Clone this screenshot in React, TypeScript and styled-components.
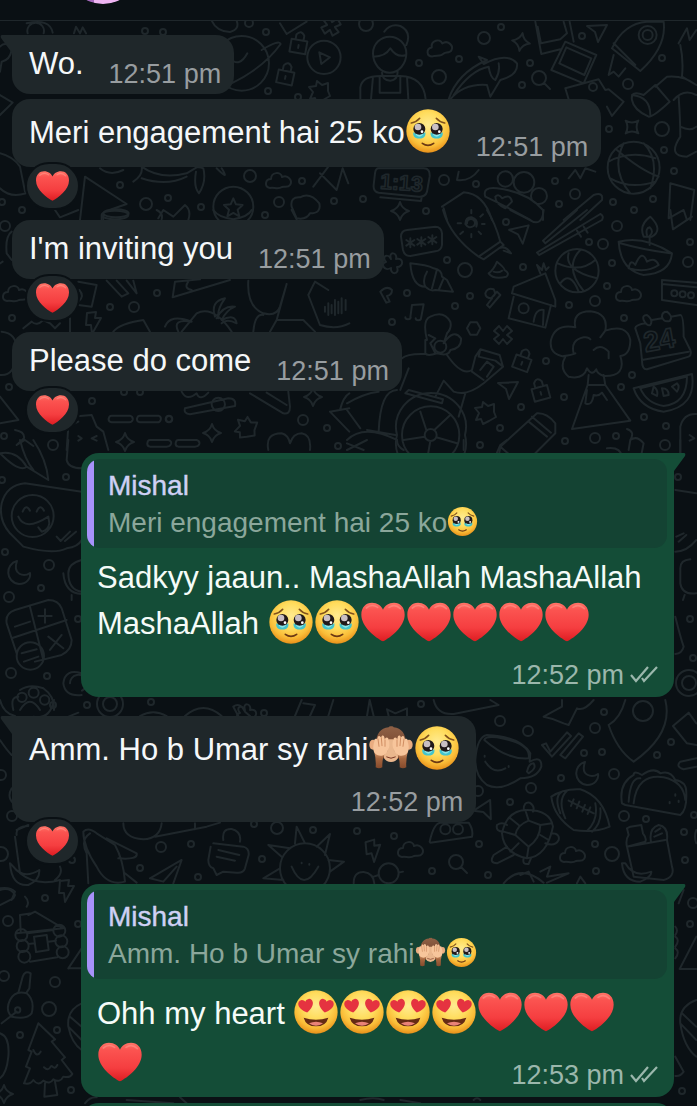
import React from "react";
import styled, { createGlobalStyle } from "styled-components";

const GlobalStyle = createGlobalStyle`
  * { box-sizing: border-box; }
  body {
    margin: 0;
    background: #0a1014;
    font-family: "Liberation Sans", Arial, sans-serif;
  }
`;

const INK = "#1f272b";

/* ---------- emoji ---------- */

type EmojiKind = "tears" | "heart" | "love" | "monkey";

const emojiLabel: Record<EmojiKind, string> = {
  tears: "face holding back tears",
  heart: "red heart",
  love: "smiling face with heart-eyes",
  monkey: "see-no-evil monkey",
};

const HEART =
  "M0 58C-22 47-65 14-65-22C-65-45-51-58-33-58C-17-58-5-49 0-37C5-49 17-58 33-58C51-58 65-45 65-22C65 14 22 47 0 58Z";

const EmojiDefs = () => (
  <svg width="0" height="0" style={{ position: "absolute" }} aria-hidden="true">
    <defs>
      <radialGradient id="face" cx="50%" cy="36%" r="66%">
        <stop offset="0" stopColor="#ffeb91" />
        <stop offset="0.45" stopColor="#ffdc5c" />
        <stop offset="0.75" stopColor="#fabd38" />
        <stop offset="1" stopColor="#e58a16" />
      </radialGradient>
      <linearGradient id="heart" x1="0" y1="0" x2="0" y2="1">
        <stop offset="0" stopColor="#ff7467" />
        <stop offset="0.2" stopColor="#fb5350" />
        <stop offset="0.65" stopColor="#f53e40" />
        <stop offset="1" stopColor="#de1c22" />
      </linearGradient>
      <linearGradient id="fur" x1="0" y1="0" x2="0" y2="1">
        <stop offset="0" stopColor="#8f6146" />
        <stop offset="1" stopColor="#6c3a24" />
      </linearGradient>
      <linearGradient id="arm" x1="0" y1="0" x2="0" y2="1">
        <stop offset="0" stopColor="#d79c70" />
        <stop offset="0.45" stopColor="#a5663f" />
        <stop offset="1" stopColor="#854a2c" />
      </linearGradient>
    </defs>
  </svg>
);

const TearEye = ({ x }: { x: number }) => (
  <g transform={`translate(${x} -6)`}>
    <path d="M-18 10Q0 20 18 10Q20 22 12 26Q0 31-12 26Q-20 22-18 10Z" fill="#43c4cd" />
    <circle r="18" fill="#21191a" />
    <path d="M-12 13Q0 22 12 13Q10 22 0 23Q-10 22-12 13Z" fill="#8fe6e6" />
    <circle cx="-4" cy="-6" r="10" fill="#c9bfc4" />
    <circle cx="8" cy="8" r="4" fill="#fff" />
  </g>
);

const MonkeyHand = ({ flip }: { flip: number }) => (
  <g transform={`scale(${flip} 1)`}>
    <path d="M17 14Q27 30 26 58Q36 64 46 58Q44 34 51 8Z" fill="url(#arm)" />
    <path
      d="M5-6C4-16 6-30 11-31C15-32 18-29 18-25L21-35C23-39 29-38 29-32L32-34C35-38 41-35 40-29L44-27C48-29 51-25 50-19C55-4 55 10 46 18C38 25 24 25 16 17C10 11 6 4 5-6Z"
      fill="#f7c59b"
    />
    <path
      d="M18-24L18-5M29-31L27-7M39-27L36-5"
      stroke="#d08d62"
      strokeWidth="3"
      strokeLinecap="round"
      fill="none"
    />
  </g>
);

const EmojiArt = ({ kind }: { kind: EmojiKind }) => {
  if (kind === "heart") {
    return (
      <>
        <path d={HEART} fill="url(#heart)" />
        <path d="M-50-42Q-34-56-16-44M18-44Q36-56 52-40" stroke="#ff9d92" strokeWidth="5" strokeLinecap="round" fill="none" opacity="0.5" />
      </>
    );
  }
  if (kind === "monkey") {
    return (
      <>
        <ellipse cx="-54" cy="-10" rx="11" ry="15" fill="#e9ac80" />
        <ellipse cx="54" cy="-10" rx="11" ry="15" fill="#e9ac80" />
        <path d="M0-65Q6-67 8-62C32-60 44-42 46-12C44 14 26 38 0 38C-26 38-44 14-46-12C-44-42-32-60-7-62Q-5-66 0-65Z" fill="url(#fur)" />
        <path d="M-7-26H7L9 8Q24 16 21 30Q14 42 0 42Q-14 42-21 30Q-24 16-9 8Z" fill="#eab78d" />
        <path d="M-13 27Q0 35 13 27" stroke="#7b3a26" strokeWidth="3" strokeLinecap="round" fill="none" />
        <MonkeyHand flip={1} />
        <MonkeyHand flip={-1} />
      </>
    );
  }
  return (
    <>
      <circle r="65" fill="url(#face)" />
      {kind === "tears" ? (
        <>
          <path d="M-50-24Q-34-27-25-38M50-24Q34-27 25-38" stroke="#80501c" strokeWidth="5" strokeLinecap="round" fill="none" />
          <TearEye x={-26} />
          <TearEye x={26} />
          <path d="M-17 37Q0 49 17 37" stroke="#6b3814" strokeWidth="5" strokeLinecap="round" fill="none" />
        </>
      ) : (
        <>
          <path d="M-37 17Q0 29 37 17Q30 43 0 43Q-30 43-37 17Z" fill="#652b14" />
          <path d="M-21 34Q0 25 21 34Q12 41 0 41Q-12 41-21 34Z" fill="#ea8378" />
          <g transform="translate(-30 -18) rotate(-10) scale(.34)">
            <path d={HEART} fill="#e53340" />
          </g>
          <g transform="translate(30 -18) rotate(10) scale(.34)">
            <path d={HEART} fill="#e53340" />
          </g>
        </>
      )}
    </>
  );
};

const LargeEmoji = styled.svg`
  width: 46px;
  height: 50px;
  vertical-align: -14px;
`;

const SmallEmoji = styled.svg`
  width: 31px;
  height: 31px;
  vertical-align: -5px;
`;

const Emoji = ({ kind, small }: { kind: EmojiKind; small?: boolean }) =>
  small ? (
    <SmallEmoji viewBox="-69 -69 138 138" role="img" aria-label={emojiLabel[kind]}>
      <EmojiArt kind={kind} />
    </SmallEmoji>
  ) : (
    <LargeEmoji viewBox="-69 -72 138 150" role="img" aria-label={emojiLabel[kind]}>
      <EmojiArt kind={kind} />
    </LargeEmoji>
  );

/* ---------- doodle wallpaper ---------- */

const rings: [number, number, number][] = [
  [145,31,3],[163,32,3],[266,32,3],[249,23,4],[268,91,3],[298,97,3],[250,176,6],[120,185,3],[146,204,6],[168,198,3],[201,207,3],[302,181,3],[279,202,5],[334,201,3],[22,210,3],[2,202,3],[265,215,3],
  [366,24,7],[484,38,6],[501,27,3],[419,63,3],[459,59,3],[439,77,7],[530,63,3],[522,85,3],[582,36,3],[662,58,3],[628,84,5],[593,87,4],[609,129,3],[662,129,7],[664,150,3],[674,171,3],[653,199,3],[613,202,3],[634,210,3],[575,194,5],[559,204,3],[555,181,3],[444,180,5],[476,184,3],[363,199,3],[426,211,3],
  [5,226,5],[157,293,3],[110,307,3],[134,307,5],[12,318,3],[92,401,3],[169,419,3],[303,420,5],[327,428,3],[53,445,5],[4,436,3],[9,387,3],[338,446,3],[124,392,3],[140,392,3],
  [506,222,3],[617,226,5],[589,242,3],[603,244,5],[690,242,3],[688,262,5],[447,260,3],[465,270,7],[523,267,3],[612,263,3],[607,286,3],[595,301,5],[569,305,3],[624,318,3],[407,293,3],[455,306,3],[470,296,3],[392,322,3],[546,361,3],[632,375,3],[621,387,3],[564,397,3],[521,407,3],[644,417,3],[666,426,3],[665,445,5],[616,436,3],[595,438,5],[565,441,3],[480,445,3],[500,428,3],
  [66,477,3],[2,480,3],[5,552,3],[49,565,5],[41,588,3],[9,597,5],[11,673,5],[47,676,3],[78,619,3],[87,705,3],[151,702,3],[678,477,3],[690,619,3],[693,658,3],[689,683,7],[689,683,13],
  [1,775,5],[12,816,5],[1,854,7],[161,847,5],[191,844,3],[140,868,3],[198,877,3],[72,860,3],[262,859,3],[277,828,6],[313,830,3],[254,824,3],[264,713,3],[110,704,7],[110,704,13],[53,705,3],
  [500,721,5],[528,731,5],[595,728,5],[584,753,3],[602,752,3],[604,712,3],[671,742,3],[657,755,3],[614,774,5],[561,778,3],[531,788,5],[510,802,3],[478,791,5],[624,816,5],[646,819,3],[684,832,3],[612,854,7],[595,844,3],[596,871,3],[488,875,3],[432,871,3],[479,844,3],[394,836,3],[357,831,3],[685,860,3],[694,815,3],[421,704,3],
  [45,898,3],[78,924,3],[8,921,5],[4,976,5],[55,982,5],[49,1009,7],[57,1030,3],[20,1035,3],[71,1090,3],[690,924,3],[693,903,5],[682,1091,3],
];

type Motif = "cloud" | "sparkle" | "bolt" | "lock" | "lens" | "cross" | "moon" | "plane" | "leaf" | "flower";

const motifPaths: Record<Motif, string> = {
  cloud: "M-9 7C-15 6-14-2-8-2C-8-9 2-10 3-4C9-7 14 0 11 4C9 7 5 5 3 6C-1 9-5 6-9 7Z",
  sparkle: "M0-9Q2-2 9 0Q2 2 0 9Q-2 2-9 0Q-2-2 0-9Z",
  bolt: "M-6-9L3-10L2-4L8-4L-1 12L-2 3L-7 3Z",
  lock: "M-8-3H8V10H-8ZM-4-3V-8Q0-14 4-8V-3M0 2V5",
  lens: "M7-1A7 7 0 1 1-7-1A7 7 0 1 1 7-1M5 4L11 10",
  cross: "M-4-9L0-4L4-9L9-4L4 0L9 4L4 9L0 4L-4 9L-9 4L-4 0L-9-4Z",
  moon: "M-2-11C-14-8-14 10 0 12C8 12 12 6 11 1C5 5-7 3-2-11Z",
  plane: "M-10-6L10-7L1 10L-2 0Z",
  leaf: "M-9 8L-6 1L-10-4L-3-5L-2-10L3-6L9-8L9 0L11 5L4 9L-2 12L-4 7Z",
  flower: "M0-4C-3-12 7-11 5-4C13-6 13 4 6 4C9 12-1 12 0 5C-7 9-11 0-5-1C-10-7-3-10 0-4Z",
};

const motifs: [Motif, number, number, number][] = [
  ["cloud", 279, 181, 0], ["cross", 331, 26, 15], ["lock", 286, 74, 12], ["leaf", 319, 91, 0], ["lock", 299, 43, 10],
  ["cloud", 440, 48, -10], ["sparkle", 521, 42, 10], ["plane", 597, 32, 0], ["lens", 539, 79, 0], ["sparkle", 632, 127, 45],
  ["sparkle", 400, 211, 0], ["plane", 520, 234, -10], ["flower", 391, 263, 0], ["cross", 503, 335, 0], ["cloud", 629, 294, 0],
  ["lock", 523, 360, 20], ["lock", 540, 390, -15], ["plane", 508, 389, 0], ["leaf", 485, 412, 0],
  ["cloud", 16, 294, 0], ["bolt", 93, 322, 0], ["sparkle", 125, 442, 0], ["sparkle", 212, 433, 0], ["sparkle", 313, 397, 0], ["leaf", 246, 427, 20],
  ["moon", 19, 572, 0], ["cloud", 411, 850, 0], ["cloud", 573, 855, 0], ["moon", 587, 773, 0], ["lens", 456, 863, 0],
  ["bolt", 373, 850, -10], ["plane", 485, 811, -30], ["bolt", 66, 890, 0], ["sparkle", 4, 1094, 0], ["flower", 245, 714, 0],
];

const sketches: { at: [number, number]; d: string }[] = [
  {
    at: [0, 0],
    d: "M643 190a82 82 0 1 0 164 0a82 82 0 1 0-164 0M690 252Q790 205 842 132Q838 118 785 150M690 175Q718 205 742 160M922 172a50 50 0 1 0 100 0a50 50 0 1 0-100 0M958 157l32 15l-26 20zM0 285L38 308L0 345M640 620a60 60 0 1 0 120 0a60 60 0 1 0-120 0M700 595l8 18l20 2l-15 14l5 20l-18-10l-18 10l5-20l-15-14l20-2zM400 545Q430 525 425 500Q480 540 560 520L590 502Q600 500 610 505Q620 545 597 580Q580 560 588 515M425 535Q500 560 560 530M650 505Q690 545 665 505M240 660L255 530L380 612L335 628M305 645a40 13 0 1 0 80 0a40 13 0 1 0-80 0V665M80 70Q150 55 158 98M83 100a25 25 0 1 1 48 0M222 100L228 80L240 100L248 82L258 100M635 62Q650 95 690 96Q720 88 710 62M840 70L860 102L920 65M0 140Q20 120 35 150Q30 180 5 185L0 215M0 565Q30 595 78 580M0 460Q40 470 60 500L75 575M940 560L985 500M960 520L1010 570M1010 570L1028 505L1045 550M875 620Q870 590 900 592Q930 575 958 610Q965 640 930 640Q920 660 890 655ZM475 655L490 630L520 650L555 615Q575 630 565 660M300 505Q330 530 370 510",
  },
  {
    at: [347, 0],
    d: "M78 160a50 50 0 1 1 100 0a50 58 0 1 1-100 0M112 95Q130 70 160 78Q195 95 178 135M80 170Q115 170 130 145Q150 175 178 165M105 218Q105 240 130 242Q152 240 152 215M40 298V262Q45 228 100 228H160Q230 230 236 298M98 230V278H160V230M72 298L78 230M180 230L184 298M305 298Q330 220 420 180L395 170L410 192Q480 155 510 190Q515 225 460 240L430 290L420 255Q350 250 310 298M320 285Q370 210 425 200Q430 235 445 240Q460 215 455 190M565 65L583 162L640 148M572 80L582 130L640 118L660 100L650 65M668 65L680 125M655 125L748 165L710 250L613 210ZM658 142L733 175L712 225L637 190ZM655 265L755 238L775 270L785 268L830 305L795 348L780 320M655 265L665 298M795 145Q830 70 900 65H950Q960 140 880 213ZM800 130L865 195M875 105a27 27 0 1 0 54 0a27 27 0 1 0-54 0M887 105a15 15 0 1 0 30 0a15 15 0 1 0-30 0M800 165L785 225L800 215L815 230L835 205M995 130L1020 85L1028 120L1048 90M1000 135Q1010 180 1005 230L1048 255M925 260L960 230Q1010 225 1048 255M855 300Q850 270 890 285L925 255L968 305Q920 350 905 350Q860 330 855 300M855 285Q910 290 910 345M980 300Q1010 265 1048 285M995 290Q1000 360 1000 410Q960 470 1020 470L1048 455M1000 380Q1030 395 1048 380M782 503a78 78 0 1 0 156 0a78 78 0 1 0-156 0M830 430Q790 510 850 580M890 430Q940 480 910 565M785 485Q850 450 925 475M790 535Q850 570 925 545M810 450Q880 510 935 530M95 505H230Q250 505 248 530L240 575Q235 592 215 590L95 578Q78 575 80 555L84 520Q86 505 95 505M100 592L222 603L224 592M335 515L330 540Q370 545 395 510M665 535L685 510L700 535L715 505L745 515M452 537a23 23 0 1 0 46 0a23 23 0 1 0-46 0M500 547a31 31 0 1 0 62 0a31 31 0 1 0-62 0M552 588a24 24 0 1 0 48 0a24 24 0 1 0-48 0M415 590Q405 560 450 565Q540 575 588 630V660M415 590Q480 620 550 660M445 590Q455 580 465 595Q490 580 495 605L475 625Q445 610 445 590M285 620L350 577Q410 580 435 660M290 625L300 660M650 660L740 585Q770 575 765 600L700 660M970 550L1042 570L1030 660M970 550L965 655L1010 630L1020 660",
  },
  {
    at: [0, 210],
    d: "M165 0L180 22L235 0M310 10a38 12 0 1 0 76 0a38 12 0 1 0-76 0V28M470 0Q490 10 485 28M640 0Q655 22 700 28Q745 20 755 0M875 0L890 28M35 65Q15 80 20 130L35 150M0 160L8 155M235 215L290 225L275 290L235 285M238 240Q255 260 235 275M320 212L365 260L385 250L350 212M380 212L410 250L400 212M518 262L525 215L600 208M518 262L690 210M565 215Q550 235 575 240M745 212Q740 290 790 310Q830 320 840 290L860 222L830 330L810 365M760 365Q765 310 790 315M830 330H910L945 365M925 255L945 215L985 240M925 255L960 345Q1010 360 1048 340M975 290V305M985 280V315M995 285V310M1005 270V315M1015 275V310M1025 265V310M1037 270V300M495 350Q510 310 575 335Q515 325 535 365M545 365L590 310Q640 285 695 365M645 320Q630 275 675 265Q650 300 655 325M650 325Q670 285 705 290Q680 300 665 330Q705 310 710 340Q680 325 665 340M70 355L95 335Q110 350 130 330L150 340L165 355L180 340M210 325V365M340 365Q360 340 430 330L450 365M5 365Q55 370 50 430Q45 500 0 495M0 560L55 630L0 640M555 595L685 565Q710 565 705 588L570 613Q550 610 555 595M635 583a20 20 0 1 0 40 0a20 20 0 1 0-40 0M545 545Q560 575 590 550Q600 575 625 548M750 550L850 610Q870 615 870 590L865 545M800 548L860 585M990 605L1048 665M990 605L1048 595M1020 600Q1030 560 1048 550M335 617H390Q400 620 398 630Q395 638 385 637H335Q325 635 326 627Q327 617 335 617M420 617H475Q485 620 482 630Q480 638 470 637H420Q410 635 411 627Q412 617 420 617M497 627a10 10 0 1 0 20 0a10 10 0 1 0-20 0M450 690H505Q516 693 513 702Q510 710 500 710H450Q441 708 442 700Q443 690 450 690M535 690H590Q600 693 598 702Q595 710 585 710H535Q526 708 527 700Q528 690 535 690M200 720L205 650L235 635M240 618L275 615L290 650L310 665L325 720M235 678L245 685L235 692M290 678L275 685L290 692M805 720Q795 670 845 670Q865 675 870 700Q880 670 905 670Q935 675 930 720M45 660Q75 665 72 685L50 705L75 690L100 708",
  },
  {
    at: [347, 210],
    d: "M180 60L265 50Q283 50 285 70V105Q283 122 265 124L190 138Q172 138 168 120L162 80Q162 62 180 60M190 85V112M178 90L202 107M202 90L178 107M223 82V109M211 87L235 104M235 87L211 104M256 76V103M244 81L268 98M268 81L244 98M288 0Q310 80 395 140L460 95Q445 40 420 0M395 140L410 148L470 105L460 95M455 115Q475 105 492 130L470 122M360 40a12 12 0 1 1 20 8Q365 58 355 42Q355 20 375 22Q395 30 388 50M373 10V0M400 20L408 13M405 42H413M395 65L402 72M373 72V82M348 65L340 72M342 40H332M190 160Q240 165 260 175Q285 180 285 200L300 210L318 245L265 240Q250 245 235 230Q195 230 190 160M240 185Q225 210 235 230M270 178L255 235M290 205L275 240M425 190Q440 180 450 155Q475 175 472 180Q490 190 478 200Q440 210 425 190M440 185Q455 190 465 182M690 0L588 92L595 100L720 0M570 128L760 12Q772 18 765 30L577 135ZM690 62L702 80M710 50L722 68M490 0L545 28Q585 55 590 0M625 182a65 65 0 1 0 130 0a65 65 0 1 0-130 0M665 130Q650 180 750 205M632 160Q700 190 745 150M700 120Q650 170 710 243M640 220Q670 180 695 245M815 95Q890 75 975 130Q970 190 890 195Q820 180 815 95M820 100Q890 120 970 130M890 80Q875 45 910 20Q950 60 915 80ZM900 75Q895 55 908 52Q922 65 908 78V105M845 175Q850 145 865 165Q885 115 900 155Q925 140 935 165Q900 190 845 175M970 0L978 58L1035 20M495 250L500 230L595 190L625 270V290L495 250M500 260L485 325L595 353L612 285M560 335Q565 295 590 300L588 345M515 295a15 15 0 1 0 30 0a15 15 0 1 0-30 0M580 190L570 165L585 180L590 160L597 180L605 172M100 245Q120 225 135 240Q135 255 120 258L128 275L118 278ZM415 250Q420 232 440 238Q450 255 435 262L450 245L460 255L428 293L420 285L435 265Q415 265 415 250M190 322L195 285L230 283L222 325M175 322a8 6 0 1 0 16 0M206 325a8 6 0 1 0 16 0M945 210L1048 218M945 210V270L1048 285M945 222L1048 232M973 250a9 9 0 1 0 18 0a9 9 0 1 0-18 0M998 253a9 9 0 1 0 18 0a9 9 0 1 0-18 0M1023 256a9 9 0 1 0 18 0a9 9 0 1 0-18 0M360 355L370 337L390 337L400 355L390 374L370 374ZM685 352Q675 305 730 304Q785 310 775 362Q840 340 850 390Q850 435 820 438Q840 500 770 498Q750 490 748 478Q735 500 720 475Q710 510 665 500Q635 475 655 440Q605 435 612 390Q625 340 685 352M680 430Q670 390 710 382Q725 380 730 388M650 438Q675 435 685 430M740 420Q760 400 785 425V445M760 382L775 362M725 495L722 525H775L770 495M722 525L675 657L850 632L775 525M720 540L715 580Q735 590 740 555Q755 560 765 548L780 570M865 355Q865 345 895 340M890 330Q885 315 900 315Q920 330 910 345Q900 350 890 330M915 330L945 325M945 320Q945 305 960 305Q980 320 968 333Q950 338 945 320M972 320L1000 315Q1010 315 1010 380L1030 420Q1035 435 1025 440L900 478Q885 480 885 450L880 400L865 355M885 450L1025 425M860 535L1035 492Q1050 590 950 605Q880 595 860 535M880 535L1020 500Q1020 580 950 588Q900 580 880 535M915 550L920 530Q935 540 930 558ZM950 558L945 535Q965 535 965 555ZM975 530L990 520Q1000 530 990 545ZM240 390Q225 330 250 320Q290 300 310 335Q315 355 300 370L290 400Q320 355 342 385Q345 415 310 420Q305 440 270 430Q240 440 235 430V390M262 410a18 18 0 1 0 36 0a18 18 0 1 0-36 0M245 375L265 385L250 400L265 430M165 445Q180 430 235 432M300 435Q345 500 375 480L385 440L400 418L458 435L468 470L410 520Q360 560 320 545L290 512L265 560M400 418L395 440L445 452L468 470M375 485L410 510M400 480L420 455L440 470L420 500M175 550L285 580L288 568L185 540ZM160 540L185 475M95 665Q100 540 150 540M145 675L60 660M150 675a105 102 0 1 1 204 0a105 102 0 1 1-204 0M165 675a86 86 0 1 1 172 0a86 86 0 1 1-172 0M233 675a18 18 0 1 1 36 0a18 18 0 1 1-36 0M238 660L220 605M262 660L310 615M233 680L170 690M268 682L330 700M250 693L240 750M355 550L335 620M0 600L40 655M0 690Q50 640 150 690M0 700L50 720M0 580Q50 550 95 545M455 740L460 710L570 610Q600 608 625 640V670L550 745M460 710L500 745M545 635L600 680M555 620L612 668M1000 750V650Q1010 610 1048 612M1028 675L1042 685L1028 692M840 657Q865 665 850 690L845 720M850 690Q870 675 890 700L880 750M780 715Q820 710 825 740",
  },
  {
    at: [0, 440],
    d: "M0 40Q50 30 80 80Q60 100 0 40M80 80L145 120Q140 60 100 0M60 0Q75 60 100 90M245 155L75 130Q20 135 5 190Q-5 240 30 280L70 320Q160 345 200 325Q235 320 245 300M35 228a63 63 0 1 0 126 0a63 63 0 1 0-126 0M55 230Q75 275 145 230L148 250Q145 270 125 275L115 262M68 215Q78 190 90 212M110 215Q120 190 132 212M170 290L182 303L210 275M195 303L228 275M245 360Q205 370 205 400Q205 450 245 455M190 400Q195 460 245 462M215 480V465M20 550Q15 520 45 510L145 480Q175 480 185 505L215 600Q215 630 185 645L105 665M20 550L50 640M90 500L130 660M35 595L200 540M45 560L90 545M115 528H155M135 508V548M145 590L190 625M185 585L150 630M50 648a41 41 0 1 0 82 0a41 41 0 1 0-82 0M65 640L110 628M72 665L115 650M245 700Q195 685 190 730Q195 770 245 765M210 730a25 25 0 1 1 36 22M40 810Q30 770 55 770M52 772a14 14 0 1 0 28 0a14 14 0 1 0-28 0M86 758a15 15 0 1 0 30 0a15 15 0 1 0-30 0M120 780a14 14 0 1 0 28 0a14 14 0 1 0-28 0M60 810Q90 760 120 810M60 750Q90 730 130 745Q165 770 162 810M205 0L200 60Q205 85 245 85",
  },
  {
    at: [347, 440],
    d: "M985 150L1048 160M985 335Q1020 335 1048 300M988 290L1010 280M995 305L1018 285M1000 385Q1000 360 1030 358M1000 385V430Q1005 465 1048 460M1013 465L1008 480M985 530Q1000 590 1010 620Q1005 640 985 642M0 30L60 0M150 0Q150 20 170 30M350 0V30M450 38L460 15L480 0M1000 40V0",
  },
  {
    at: [0, 700],
    d: "M0 0Q10 40 45 48M100 50Q150 60 162 0M200 52L235 38M420 48Q460 25 500 48M555 48Q610 0 665 48M700 20Q720 5 735 35L750 48M700 20L715 48M885 48L905 0M910 10L945 15L930 48M985 48L1000 0M35 265Q20 290 40 310M0 120Q20 150 35 165M50 390L85 375M50 405Q45 380 85 378M45 410L60 520Q110 560 180 540M30 490Q35 560 85 555Q120 540 118 510Q70 540 40 500ZM180 500Q190 520 165 540M250 395Q265 380 290 400L345 435Q370 480 375 545Q320 560 290 500Q250 440 250 395M270 400Q240 420 260 460L265 550M320 415L410 460Q415 480 355 475M375 520L410 548M450 535L545 480L520 550M450 535L490 545L530 500M370 370Q370 415 430 418Q480 415 485 370M465 410L620 380L660 368M585 370V388M640 430L730 440Q748 445 746 465L735 505Q730 520 710 518L670 515L650 525L640 505Q625 500 625 480L632 440M655 450L718 465M650 470L705 482M670 420Q665 385 695 387Q725 395 720 425M840 505a75 75 0 1 0 150 0a75 75 0 1 0-150 0M885 430L890 380L915 430M950 440L990 402L975 465M985 480L1032 485L990 515M845 470L805 435L870 445M840 505L790 535L850 540M875 500Q910 580 955 500M905 488v2M928 492v2M0 565Q30 560 45 575L35 600",
  },
  {
    at: [347, 700],
    d: "M60 48L68 0L80 48M125 48L120 28L145 40L180 25V48M260 0Q270 45 320 42L455 15L430 0M590 50Q620 55 650 70L665 75L690 25Q710 35 740 0M590 50L645 20V0M785 75Q820 55 835 0M785 75Q810 150 860 185Q980 100 955 0M858 33a30 30 0 1 0 60 0a30 30 0 1 0-60 0M385 180Q390 110 420 105Q520 110 550 160L548 185Q585 165 583 200Q570 235 520 235Q460 275 420 255Q385 230 385 180M412 120Q480 180 545 175Q555 130 450 112Q415 108 412 120M540 215Q545 190 560 190Q570 205 545 220ZM415 185Q440 225 475 205M413 167v3M485 198v3M585 135L597 130L610 155L660 97L672 108L615 170ZM640 165L695 100L708 110L655 175ZM978 78L1025 38L1048 70M978 78L1020 130L1048 135M1048 175L1000 185Q985 200 1010 208L1048 200M825 310Q815 250 860 225Q860 210 885 225Q920 200 940 220Q970 210 985 240Q1020 245 1018 280Q1020 330 1000 345L835 315ZM860 310Q870 220 950 232Q1010 245 1015 300M845 305Q850 230 880 235M985 283v4M968 306v4M995 302v4M613 290Q650 265 700 268Q770 290 788 380Q740 400 680 390Q620 350 613 290M645 275Q620 290 640 340M660 272Q630 300 655 355M760 325Q765 370 735 395M745 310Q755 360 720 393M665 302L740 340M680 298L672 318M697 305L689 325M714 315L706 335M730 322L722 342M465 400Q480 330 540 330Q610 330 618 380Q600 470 540 475Q470 460 465 400M505 405Q510 375 545 362L580 375Q580 415 545 440ZM505 405L470 395M545 362L535 330M580 375L615 370M545 440L540 472M580 405L605 420M515 430L490 455M515 375L490 355M530 330Q530 305 548 308Q565 320 558 335M612 400Q640 400 635 420Q625 440 595 430M470 395Q445 395 450 375Q465 365 480 375M480 440L440 465Q425 490 450 490L500 465M530 475Q525 495 545 492L553 472M248 425Q260 370 280 368H365Q380 390 375 410L250 428ZM280 388a15 15 0 1 0 30 0a15 15 0 1 0-30 0M318 388a15 15 0 1 0 30 0a15 15 0 1 0-30 0M20 550Q20 515 50 516Q80 520 82 550M95 520a30 30 0 1 0 60 0a30 30 0 1 0-60 0M80 530L95 525M155 518L168 515M470 550Q520 490 590 548M520 525L545 515L560 545M580 515L610 500L600 530L665 520L600 548M690 550L700 530L715 550M845 405L840 385L850 380L883 375L888 400Q900 415 895 425L840 440Q835 420 845 405M912 425Q905 385 935 375Q965 380 960 420L975 500Q985 530 950 540L860 530L840 440L955 420M925 395L940 385M922 410L945 400M825 490Q830 545 880 545Q915 530 913 515Q860 535 835 490ZM1048 390Q1040 410 1048 430",
  },
  {
    at: [0, 870],
    d: "M0 60Q30 50 45 75L40 85L0 105M60 135L62 185M60 135L95 130L105 125L190 175L50 190M75 80Q90 95 80 110M105 125L85 135M46 195a18 18 0 1 0 36 0a18 18 0 1 0-36 0M160 182a18 18 0 1 0 36 0a18 18 0 1 0-36 0M50 228a18 18 0 1 0 36 0a18 18 0 1 0-36 0M166 214a18 18 0 1 0 36 0a18 18 0 1 0-36 0M55 260a18 18 0 1 0 36 0a18 18 0 1 0-36 0M170 247a18 18 0 1 0 36 0a18 18 0 1 0-36 0M82 190L160 180M85 222L105 220M145 215L168 212M90 275L172 262M102 200L140 195L146 240L108 246ZM205 295L245 235M205 295H245M68 320Q75 300 92 310L88 355L78 370M68 320L55 368M30 390Q45 360 80 370Q105 390 95 430Q80 450 35 440Q15 420 30 390M45 420a8 8 0 1 0 16 0a8 8 0 1 0-16 0M50 425L5 460M0 490Q30 500 25 560Q20 610 0 625M115 460L85 540L95 545L78 590L90 595L72 640Q90 645 100 630Q115 650 130 632Q150 645 160 628Q180 640 190 620Q210 625 217 612L185 570L195 562L155 515L165 508L115 460M135 640L133 680L172 675L165 635M100 540Q110 565 122 545M132 592Q145 605 152 590M155 588Q165 600 172 585M245 400Q200 420 205 470Q215 520 245 540M210 440L245 470M205 470L245 510M255 700Q270 680 290 682M380 690L520 700M540 682L560 700",
  },
  {
    at: [347, 870],
    d: "M985 170Q995 180 985 195M985 200Q1000 210 985 230M985 235Q1000 245 985 265M998 297H1048M998 297L1048 200M995 100L1010 60M1048 390Q995 410 1000 460Q1010 530 1048 560M1005 430L1048 470M1000 460L1048 510M985 560L1010 605Q1000 620 985 618M40 690Q80 680 110 690M160 690L220 700M380 690Q390 680 400 690",
  },
];

const Wallpaper = styled.svg`
  position: absolute;
  inset: 0 auto auto 0;
  width: 697px;
  height: 1106px;
  fill: none;
  stroke: ${INK};
  stroke-width: 2;
  stroke-linejoin: round;
  stroke-linecap: round;
`;

const Numerals = styled.text<{ $size: number }>`
  font: bold ${(p) => p.$size}px "Liberation Sans", sans-serif;
`;

const Doodles = () => (
  <Wallpaper viewBox="0 0 697 1106" aria-hidden="true">
    {rings.map(([x, y, r]) => (
      <circle key={`${x}-${y}-${r}`} cx={x} cy={y} r={r} />
    ))}
    {motifs.map(([kind, x, y, turn]) => (
      <path key={`${kind}-${x}-${y}`} d={motifPaths[kind]} transform={`translate(${x} ${y}) rotate(${turn})`} />
    ))}
    {sketches.map(({ at, d }) => (
      <g key={at.join("-")} transform={`translate(${at[0]} ${at[1]}) scale(.3333)`} strokeWidth="6">
        <path d={d} />
      </g>
    ))}
    <g transform="translate(347 0) scale(.3333)" strokeWidth="5">
      <Numerals $size={64} x="98" y="566" transform="rotate(4 102 565)">1:13</Numerals>
    </g>
    <g transform="translate(347 210) scale(.3333)" strokeWidth="5">
      <Numerals $size={84} x="896" y="426" transform="rotate(-10 896 426)">24</Numerals>
    </g>
  </Wallpaper>
);

/* ---------- page ---------- */

const Page = styled.div`
  display: flex;
  flex-direction: column;
  height: 100vh;
  overflow: hidden;
  background: #0a1014;
`;

const Header = styled.header`
  position: relative;
  z-index: 1;
  display: flex;
  align-items: flex-end;
  flex: none;
  height: 21px;
  padding: 0 0 16px 67px;
  overflow: hidden;
  background: #0a1014;
  border-bottom: 1px solid #1f272b;
`;

const Avatar = styled.div`
  flex: none;
  width: 72px;
  height: 72px;
  border-radius: 50%;
  background: linear-gradient(90deg, #a568bd 38%, #efb5f3 38%);
`;

const Chat = styled.main`
  display: flex;
  flex: 1;
  flex-direction: column;
  gap: 19px;
  min-height: 0;
  padding: 14px 23px 0 12px;
  overflow: hidden;
`;

const Group = styled.section`
  position: relative;
  display: flex;
  flex: none;
  flex-direction: column;
`;

const Row = styled.article<{ $gap?: number; $out?: boolean }>`
  display: flex;
  flex-direction: column;
  align-items: ${(p) => (p.$out ? "stretch" : "flex-start")};
  margin-top: ${(p) => p.$gap ?? 0}px;
  padding-left: ${(p) => (p.$out ? 69 : 0)}px;
`;

const IncomingBubble = styled.div<{ $tail?: boolean; $stacked?: boolean }>`
  position: relative;
  display: flex;
  flex-direction: ${(p) => (p.$stacked ? "column" : "row")};
  align-items: flex-end;
  gap: ${(p) => (p.$stacked ? 12 : 25)}px;
  padding: 8px 13px 4px 17px;
  border-radius: ${(p) => (p.$tail ? "0 18px 18px 18px" : "18px")};
  background: #1f272a;
  color: #f5f7f9;
`;

const OutgoingBubble = styled.div<{ $tail?: boolean }>`
  position: relative;
  min-height: 60px;
  padding: 6px 7px 6px 6px;
  border-radius: ${(p) => (p.$tail ? "18px 0 18px 18px" : "18px")};
  background: #144d37;
  color: #f5fbf8;
`;

const TailShape = styled.svg<{ $side: "left" | "right" }>`
  position: absolute;
  top: 0;
  ${(p) => p.$side}: -12px;
  width: 13px;
  height: 20px;
  fill: ${(p) => (p.$side === "left" ? "#1f272a" : "#144d37")};
`;

const Tail = ({ side }: { side: "left" | "right" }) => (
  <TailShape $side={side} viewBox="0 0 13 20" aria-hidden="true">
    <path
      d={side === "left" ? "M13 0H2Q0 0 1 3L12 18V20H13Z" : "M0 0H11Q13 0 12 3L1 18V20H0Z"}
    />
  </TailShape>
);

const Text = styled.p<{ $stacked?: boolean }>`
  margin: 0;
  padding: 0 ${(p) => (p.$stacked ? 3 : 0)}px ${(p) => (p.$stacked ? 0 : 6)}px 0;
  font-size: 31px;
  line-height: 41px;
`;

const Body = styled.div`
  display: grid;
  padding: 9px 9px 0 10px;
`;

const OutgoingText = styled(Text)<{ $inline?: boolean }>`
  grid-area: 1 / 1;
  padding: 0 0 ${(p) => (p.$inline ? 3 : 43)}px;
`;

const Meta = styled.footer<{ $out?: boolean }>`
  display: flex;
  grid-area: 1 / 1;
  align-items: center;
  align-self: end;
  justify-self: end;
  gap: 6px;
  color: ${(p) => (p.$out ? "#9bb7ac" : "#989da0")};
  font-size: 27px;
  line-height: 32px;
  white-space: nowrap;
`;

const TickIcon = styled.svg`
  width: 28px;
  height: 20px;
  fill: none;
  stroke: currentColor;
  stroke-width: 2.2;
`;

const Ticks = () => (
  <TickIcon viewBox="0 0 28 20" role="img" aria-label="Delivered">
    <path d="M1 10L6 16L18 2M12 13L14 16L27 2" />
  </TickIcon>
);

const Quote = styled.blockquote`
  display: flex;
  margin: 0;
  overflow: hidden;
  border-radius: 13px;
  background: #144333;

  &::before {
    content: "";
    width: 7px;
    background: #a792fa;
  }
`;

const QuoteBody = styled.div`
  padding: 9px 14px 6px;
`;

const QuoteName = styled.div`
  color: #cfd0f5;
  font-size: 28px;
  line-height: 36px;
  -webkit-text-stroke: 0.4px #cfd0f5;
`;

const QuoteText = styled.div`
  color: #8ba79b;
  font-size: 28px;
  line-height: 38px;
  height: 38px;
`;

const ReactionButton = styled.button`
  position: relative;
  display: flex;
  align-items: center;
  justify-content: center;
  width: 55px;
  height: 48px;
  margin: -5px 0 0 13px;
  padding: 0;
  border: 2px solid #0a1014;
  border-radius: 24px;
  background: #1f272a;
`;

const ReactionHeart = styled.svg`
  width: 33px;
  height: 30px;
`;

const Reaction = () => (
  <ReactionButton type="button" aria-label="Red heart reaction">
    <ReactionHeart viewBox="-65 -59 130 118" aria-hidden="true">
      <EmojiArt kind="heart" />
    </ReactionHeart>
  </ReactionButton>
);

interface IncomingProps {
  time: string;
  gap?: number;
  tail?: boolean;
  stacked?: boolean;
  reacted?: boolean;
  children: React.ReactNode;
}

const Incoming = ({ time, gap, tail, stacked, reacted, children }: IncomingProps) => (
  <Row $gap={gap}>
    <IncomingBubble $tail={tail} $stacked={stacked}>
      {tail && <Tail side="left" />}
      <Text $stacked={stacked}>{children}</Text>
      <Meta>
        <time>{time}</time>
      </Meta>
    </IncomingBubble>
    {reacted && <Reaction />}
  </Row>
);

interface OutgoingProps {
  time: string;
  quote: React.ReactNode;
  inline?: boolean;
  children: React.ReactNode;
}

const Outgoing = ({ time, quote, inline, children }: OutgoingProps) => (
  <Row $out>
    <OutgoingBubble $tail>
      <Tail side="right" />
      <Quote>
        <QuoteBody>
          <QuoteName>Mishal</QuoteName>
          <QuoteText>{quote}</QuoteText>
        </QuoteBody>
      </Quote>
      <Body>
        <OutgoingText $inline={inline}>{children}</OutgoingText>
        <Meta $out>
          <time>{time}</time>
          <Ticks />
        </Meta>
      </Body>
    </OutgoingBubble>
  </Row>
);

const repeat = (kind: EmojiKind, count: number) =>
  Array.from({ length: count }, (_, i) => <Emoji key={`${kind}${i}`} kind={kind} />);

export default function App() {
  return (
    <>
      <GlobalStyle />
      <EmojiDefs />
      <Page>
        <Doodles />
        <Header>
          <Avatar />
        </Header>
        <Chat>
          <Group>
            <Incoming time="12:51 pm" tail>
              Wo.
            </Incoming>
            <Incoming time="12:51 pm" gap={5} reacted>
              Meri engagement hai 25 ko
              <Emoji kind="tears" />
            </Incoming>
            <Incoming time="12:51 pm" gap={10} reacted>
              I'm inviting you
            </Incoming>
            <Incoming time="12:51 pm" gap={10} reacted>
              Please do come
            </Incoming>
          </Group>

          <Group>
            <Outgoing
              time="12:52 pm"
              quote={
                <>
                  Meri engagement hai 25 ko
                  <Emoji kind="tears" small />
                </>
              }
            >
              Sadkyy jaaun.. MashaAllah MashaAllah MashaAllah {repeat("tears", 2)}
              {repeat("heart", 5)}
            </Outgoing>
          </Group>

          <Group>
            <Incoming time="12:52 pm" tail stacked reacted>
              Amm. Ho b Umar sy rahi
              <Emoji kind="monkey" />
              <Emoji kind="tears" />
            </Incoming>
          </Group>

          <Group>
            <Outgoing
              time="12:53 pm"
              inline
              quote={
                <>
                  Amm. Ho b Umar sy rahi
                  <Emoji kind="monkey" small />
                  <Emoji kind="tears" small />
                </>
              }
            >
              Ohh my heart {repeat("love", 4)}
              {repeat("heart", 4)}
            </Outgoing>
            <Row $out $gap={6}>
              <OutgoingBubble />
            </Row>
          </Group>
        </Chat>
      </Page>
    </>
  );
}
